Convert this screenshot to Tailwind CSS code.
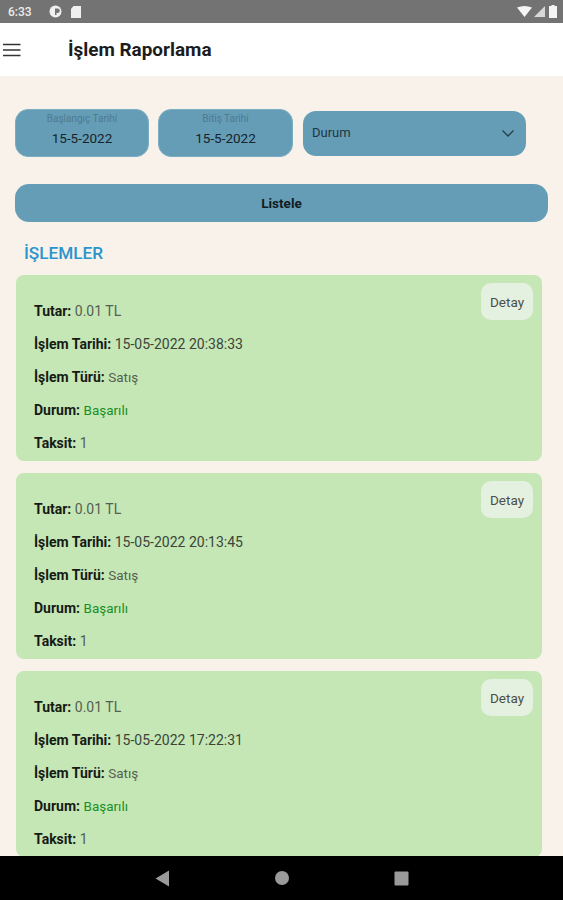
<!DOCTYPE html>
<html lang="tr">
<head>
    <meta charset="UTF-8">
    <meta name="viewport" content="width=device-width, initial-scale=1.0">
    <title>İşlem Raporlama</title>
    <script src="https://cdn.jsdelivr.net/npm/@tailwindcss/browser@4"></script>
</head>
<body class="bg-[#f9f2ea] font-['Roboto',sans-serif] w-[563px] h-[900px] overflow-hidden flex flex-col">
    <!-- status bar -->
    <div class="h-[23px] bg-[#737373] shrink-0 flex items-center justify-between pl-[8px] pr-[6px] text-white">
        <div class="flex items-center">
            <span class="text-[12px] font-medium text-[#ececec] w-[34px]">6:33</span>
            <svg class="ml-[7px]" width="13" height="13" viewBox="0 0 13 13"><circle cx="6.5" cy="6.5" r="6" fill="#f0f0f0"/><path d="M6 3.5h2.5a2.2 2.2 0 0 1 0 4.6H7.5v2H6z" fill="#737373"/></svg>
            <svg class="ml-[9px]" width="10" height="12" viewBox="0 0 10 12"><path d="M2.5 0H10v12H0V3z" fill="#f0f0f0"/></svg>
        </div>
        <div class="flex items-center gap-[2px]">
            <svg width="15" height="11" viewBox="0 0 15 11"><path d="M0 1.5Q7.5-1.5 15 1.5L7.5 11z" fill="#f5f5f5"/></svg>
            <svg width="11" height="11" viewBox="0 0 11 11"><path d="M11 0v11H0z" fill="#d8d8d8"/></svg>
            <svg class="ml-[2px]" width="8" height="13" viewBox="0 0 8 13"><path d="M2.5 0h3v1H8v12H0V1h2.5z" fill="#f5f5f5"/></svg>
        </div>
    </div>

    <!-- app bar -->
    <div class="h-[53px] bg-white shrink-0 flex items-center">
        <svg class="ml-[2px]" width="20" height="16" viewBox="0 0 20 16"><path d="M1 2.5h17.5M1 8h17.5M1 13.5h17.5" stroke="#333" stroke-width="1.7"/></svg>
        <span class="ml-[46px] mt-[2px] text-[18.9px] font-bold text-[#1c1c1c]">İşlem Raporlama</span>
    </div>

    <main class="flex-1 min-h-0 overflow-hidden px-[15px]">
        <!-- filters -->
        <div class="flex items-center mt-[33px] h-[48px]">
            <div class="w-[134px] h-[48px] rounded-[13px] bg-[#659db6] flex flex-col items-center border border-[#79adc3]">
                <span class="text-[10px] leading-[11px] mt-[3px] text-[#4f7a90]">Başlangıç Tarihi</span>
                <span class="text-[13.5px] leading-[16px] mt-[6px] text-[#16242c]">15-5-2022</span>
            </div>
            <div class="w-[135px] h-[48px] ml-[9px] rounded-[13px] bg-[#659db6] flex flex-col items-center border border-[#79adc3]">
                <span class="text-[10px] leading-[11px] mt-[3px] text-[#4f7a90]">Bitiş Tarihi</span>
                <span class="text-[13.5px] leading-[16px] mt-[6px] text-[#16242c]">15-5-2022</span>
            </div>
            <div class="w-[223px] h-[45px] ml-[10px] rounded-[13px] bg-[#659db6] flex items-center justify-between pl-[9px] pr-[11px]">
                <span class="text-[13px] text-[#1f3540]">Durum</span>
                <svg width="14" height="9" viewBox="0 0 14 9"><path d="M1.5 1.5L7 7l5.5-5.5" fill="none" stroke="#263e4a" stroke-width="1.3"/></svg>
            </div>
        </div>

        <button class="block w-[533px] h-[38px] mt-[27px] rounded-[14px] bg-[#659db6] text-[13.5px] font-bold text-[#121c22]">Listele</button>

        <h2 class="mt-[19px] ml-[9px] text-[17.2px] leading-[24px] font-medium text-[#2a94cf]">İŞLEMLER</h2>

        <!-- cards -->
        <div class="mt-[10px] ml-[1px] w-[526px] flex flex-col gap-[12px]">
            <div class="relative shrink-0 h-[186px] rounded-[8px] bg-[#c5e7b6] pl-[18px] pt-[28px] flex flex-col gap-[17px] text-[14px] leading-[16px] text-[#555f50]">
                <button class="absolute top-[8px] right-[9px] w-[52px] h-[37px] rounded-[10px] bg-[#e5f1e0] text-[13.5px] text-[#4b4f4a]">Detay</button>
                <p><b class="font-bold text-[#161a14]">Tutar:</b> 0.01 TL</p>
                <p><b class="font-bold text-[#161a14]">İşlem Tarihi:</b> <span class="text-[#3c4439]">15-05-2022 20:38:33</span></p>
                <p><b class="font-bold text-[#161a14]">İşlem Türü:</b> <span class="text-[13.5px]">Satış</span></p>
                <p><b class="font-bold text-[#161a14]">Durum:</b> <span class="text-[13.5px] text-[#1a8f28]">Başarılı</span></p>
                <p><b class="font-bold text-[#161a14]">Taksit:</b> 1</p>
            </div>
            <div class="relative shrink-0 h-[186px] rounded-[8px] bg-[#c5e7b6] pl-[18px] pt-[28px] flex flex-col gap-[17px] text-[14px] leading-[16px] text-[#555f50]">
                <button class="absolute top-[8px] right-[9px] w-[52px] h-[37px] rounded-[10px] bg-[#e5f1e0] text-[13.5px] text-[#4b4f4a]">Detay</button>
                <p><b class="font-bold text-[#161a14]">Tutar:</b> 0.01 TL</p>
                <p><b class="font-bold text-[#161a14]">İşlem Tarihi:</b> <span class="text-[#3c4439]">15-05-2022 20:13:45</span></p>
                <p><b class="font-bold text-[#161a14]">İşlem Türü:</b> <span class="text-[13.5px]">Satış</span></p>
                <p><b class="font-bold text-[#161a14]">Durum:</b> <span class="text-[13.5px] text-[#1a8f28]">Başarılı</span></p>
                <p><b class="font-bold text-[#161a14]">Taksit:</b> 1</p>
            </div>
            <div class="relative shrink-0 h-[186px] rounded-[8px] bg-[#c5e7b6] pl-[18px] pt-[28px] flex flex-col gap-[17px] text-[14px] leading-[16px] text-[#555f50]">
                <button class="absolute top-[8px] right-[9px] w-[52px] h-[37px] rounded-[10px] bg-[#e5f1e0] text-[13.5px] text-[#4b4f4a]">Detay</button>
                <p><b class="font-bold text-[#161a14]">Tutar:</b> 0.01 TL</p>
                <p><b class="font-bold text-[#161a14]">İşlem Tarihi:</b> <span class="text-[#3c4439]">15-05-2022 17:22:31</span></p>
                <p><b class="font-bold text-[#161a14]">İşlem Türü:</b> <span class="text-[13.5px]">Satış</span></p>
                <p><b class="font-bold text-[#161a14]">Durum:</b> <span class="text-[13.5px] text-[#1a8f28]">Başarılı</span></p>
                <p><b class="font-bold text-[#161a14]">Taksit:</b> 1</p>
            </div>
        </div>
    </main>

    <!-- nav bar -->
    <div class="h-[44px] bg-black shrink-0 relative">
        <svg class="absolute left-[155px] top-[14px]" width="15" height="17" viewBox="0 0 15 17"><path d="M14 0.5v16L0.5 8.5z" fill="#9a9a9a"/></svg>
        <svg class="absolute left-[275px] top-[15px]" width="14" height="14" viewBox="0 0 14 14"><circle cx="7" cy="7" r="7" fill="#9a9a9a"/></svg>
        <svg class="absolute left-[394px] top-[15px]" width="15" height="15" viewBox="0 0 15 15"><rect x="0.5" y="0.5" width="14" height="14" rx="1" fill="#9a9a9a"/></svg>
    </div>
</body>
</html>
